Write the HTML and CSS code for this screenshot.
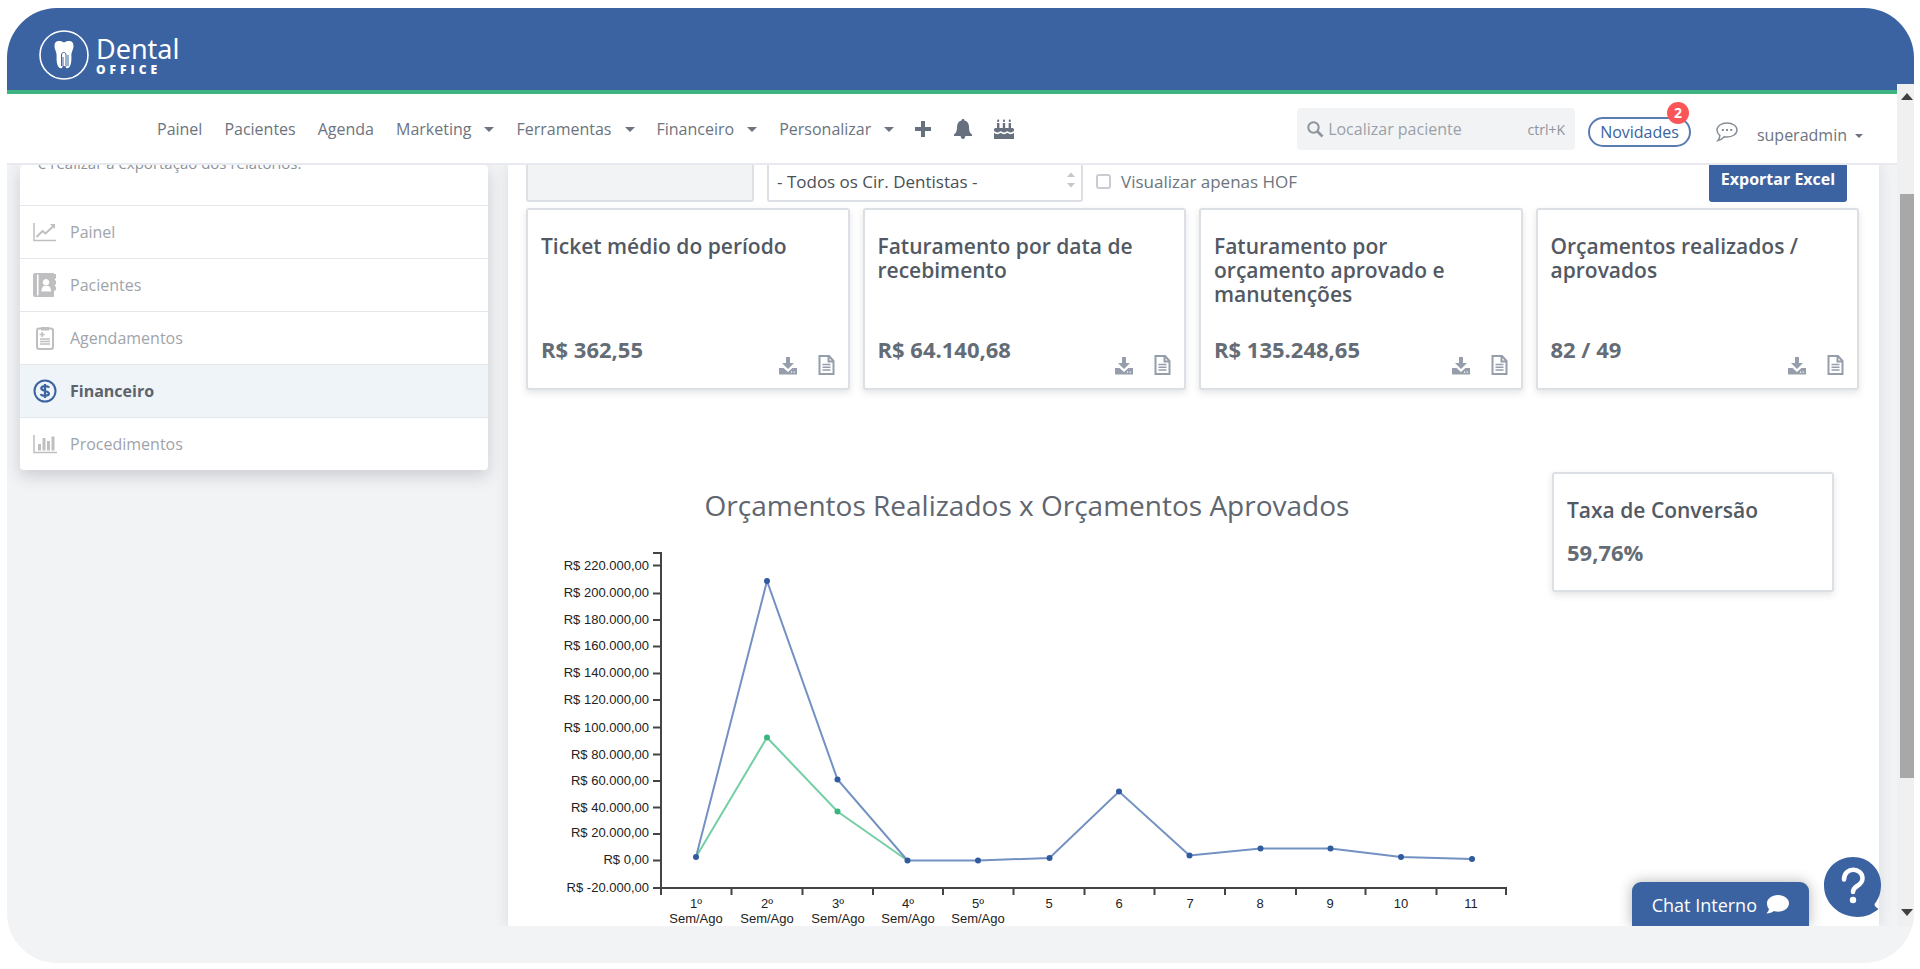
FILE: index.html
```html
<!DOCTYPE html>
<html lang="pt-BR">
<head>
<meta charset="utf-8">
<title>Dental Office</title>
<link rel="stylesheet" href="styles.css">
</head>
<body>
<svg class="sprite" aria-hidden="true">
  <symbol id="i-download" viewBox="0 0 18 18"><path fill="currentColor" d="M7 0h4v6h4L9 12 3 6h4zM0 11h4.600L9 15l4.400-4H18v6.500H0z"/><path fill="#fff" d="M12 14.500h1.200v1.200H12zM14.600 14.500h1.200v1.200h-1.200z"/></symbol>
  <symbol id="i-file" viewBox="0 0 17 20"><path fill="none" stroke="currentColor" stroke-width="2" d="M1.500 1h9.500l4.500 5v13h-14zM10.500 1v5.500h5"/><path fill="none" stroke="currentColor" stroke-width="1.500" d="M4.500 9.500h8M4.500 12.200h8M4.500 15h8"/></symbol>
</svg>
<div class="frame">
  <header class="topbar">
    <a class="brand" href="#" aria-label="Dental Office">
      <svg class="brand-mark" viewBox="0 0 50 50">
        <circle cx="25" cy="25" r="24" fill="none" stroke="#fff" stroke-width="1.600"/>
        <path fill="#fff" d="M25 12.500c-3-2.200-9.500-3-9.500 3.300 0 4 2.300 6 2.100 10.200-.2 5 .2 12 4.600 12.300 1.600.1 1-2.300 2.800-2.300s1.200 2.400 2.800 2.300c4.400-.3 4.800-7.300 4.600-12.300-.2-4.200 2.100-6.200 2.100-10.200 0-6.300-6.500-5.500-9.500-3.300z"/>
        <path fill="none" stroke="#3b63a1" stroke-width="1" d="M22.500 36V25c0-3.500 4.500-3.500 4.500 0v10c0 4-3 4.500-3 1V27M29 25v11"/>
      </svg>
      <span class="brand-text"><span class="brand-name">Dental</span><span class="brand-sub">OFFICE</span></span>
    </a>
  </header>

  <nav class="nav">
    <div class="nav-links">
      <a href="#">Painel</a>
      <a href="#">Pacientes</a>
      <a href="#">Agenda</a>
      <a href="#" class="drop">Marketing</a>
      <a href="#" class="drop">Ferramentas</a>
      <a href="#" class="drop">Financeiro</a>
      <a href="#" class="drop">Personalizar</a>
    </div>
    <div class="nav-icons">
      <button type="button" aria-label="Adicionar"><svg width="18" height="18" viewBox="0 0 18 18"><path fill="currentColor" d="M7 1h4v6h6v4h-6v6H7v-6H1V7h6z"/></svg></button>
      <button type="button" aria-label="Notificações"><svg width="18" height="20" viewBox="0 0 18 20"><path fill="currentColor" d="M9 0c1 0 1.500.7 1.500 1.600C13.500 2.300 15 4.800 15 8c0 5 1.500 6.500 3 7.500v1.500H11.300c0 1.800-1 3-2.300 3s-2.300-1.200-2.300-3H0v-1.500c1.500-1 3-2.500 3-7.500 0-3.200 1.500-5.700 4.500-6.400C7.500.7 8 0 9 0z"/></svg></button>
      <button type="button" aria-label="Aniversariantes"><svg width="20" height="20" viewBox="0 0 20 20"><path fill="currentColor" d="M3 4h2.400v6H3zM8.800 4h2.400v6H8.800zM14.600 4H17v6h-2.400zM4.200 0c1.600 1.600 1.400 3-.1 3S2.800 1.600 4.200 0zM10 0c1.600 1.600 1.400 3-.1 3S8.600 1.600 10 0zM15.800 0c1.600 1.600 1.400 3-.1 3S14.400 1.600 15.800 0zM1.500 9h17c1 0 1.500.8 1.500 2v1.200c-1.700 0-1.900 1.300-3.400 1.300-1.700 0-1.700-1.300-3.300-1.300s-1.700 1.300-3.300 1.300-1.700-1.300-3.300-1.300-1.600 1.300-3.300 1.300C2 13.500 1.700 12.200 0 12.200V11c0-1.200.5-2 1.500-2zM0 14c1.400 0 1.600 1.300 3.400 1.300 1.600 0 1.700-1.300 3.300-1.300s1.700 1.300 3.300 1.300 1.700-1.300 3.300-1.300 1.600 1.300 3.300 1.300c1.800 0 2-1.300 3.400-1.300v6H0z"/></svg></button>
    </div>
    <div class="nav-tools">
      <label class="search">
        <svg width="17" height="17" viewBox="0 0 17 17"><circle cx="6.500" cy="6.500" r="5.200" fill="none" stroke="currentColor" stroke-width="2"/><path d="M10.500 10.500l5 5" stroke="currentColor" stroke-width="2.600"/></svg>
        <input type="text" placeholder="Localizar paciente" aria-label="Localizar paciente">
        <span class="hint">ctrl+K</span>
      </label>
      <button type="button" class="news">Novidades<span class="badge">2</span></button>
      <button type="button" class="talk" aria-label="Mensagens"><svg width="22" height="20" viewBox="0 0 22 20"><path fill="none" stroke="currentColor" stroke-width="1.500" d="M11 1c5.600 0 10 3 10 7s-4.400 7-10 7c-1 0-2-.1-2.800-.3C6.500 16.600 4.500 18 2 18.600c1.200-1.400 1.800-3 1.800-5.200C2 12 1 10.200 1 8c0-4 4.400-7 10-7z"/><path fill="currentColor" d="M5.800 7h2v2h-2zM10 7h2v2h-2zM14.200 7h2v2h-2z"/></svg></button>
      <a href="#" class="user">superadmin</a>
    </div>
  </nav>

  <div class="viewport">
    <aside class="side">
      <p class="side-note">e realizar a exportação dos relatórios.</p>
      <a href="#" class="side-item"><svg class="side-icon" viewBox="0 0 24 24"><path fill="none" stroke="currentColor" stroke-width="1.500" d="M1 3v17.500h22"/><path fill="none" stroke="currentColor" stroke-width="2" d="M3.500 17l6-6 3 2.500L20 6.500"/><path fill="currentColor" d="M17 4h5v5z"/></svg>Painel</a>
      <a href="#" class="side-item"><svg class="side-icon" viewBox="0 0 24 24"><path fill="currentColor" fill-rule="evenodd" d="M2 0h18a1 1 0 0 1 1 1h2v4l-1.500 1.500L23 8v3l-1.500 1.500L23 14v3l-2 1v5a1 1 0 0 1-1 1H2a2 2 0 0 1-2-2V2a2 2 0 0 1 2-2zM4 1.500v21h1.500v-21zM13 6a3.300 3.300 0 1 0 .01 0zM8.500 18.500h9.500c0-4-1.500-5.500-3-5.500h-3.500c-1.500 0-3 1.500-3 5.500z"/></svg>Pacientes</a>
      <a href="#" class="side-item"><svg class="side-icon" viewBox="0 0 24 24"><rect x="4" y="2.500" width="16" height="20.500" rx="2" fill="none" stroke="currentColor" stroke-width="2"/><path fill="currentColor" d="M8 1h8v3.500H8zM8.400 6h1.500v1.800h1.800v1.500H9.900v1.800H8.400V9.300H6.600V7.800h1.800z"/><path stroke="currentColor" stroke-width="1.400" d="M7 13h10M7 15.500h10M7 18h10"/></svg>Agendamentos</a>
      <a href="#" class="side-item active"><svg class="side-icon" viewBox="0 0 24 24"><circle cx="12" cy="12" r="10.500" fill="none" stroke="currentColor" stroke-width="2"/><path fill="none" stroke="currentColor" stroke-width="2.200" d="M16 8.800C15.500 6.500 8.300 6.300 8.300 9.300c0 3.400 7.600 2 7.600 5.300 0 3-7.400 2.800-8 .3M12 5v14"/></svg>Financeiro</a>
      <a href="#" class="side-item"><svg class="side-icon" viewBox="0 0 24 24"><path fill="none" stroke="currentColor" stroke-width="1.500" d="M1 3v17.500h23"/><path fill="currentColor" d="M5 12h3v6.500H5zM9.500 6h3v12.500h-3zM14 9h3v9.500h-3zM18.500 4.500h3v14h-3z"/></svg>Procedimentos</a>
    </aside>

    <main class="panel">
      <form class="filters">
        <input class="field" type="text" disabled aria-label="Período">
        <span class="picker">
          <select aria-label="Cirurgião dentista"><option>- Todos os Cir. Dentistas -</option></select>
          <svg class="picker-arrows" width="8" height="16" viewBox="0 0 8 16"><path fill="#c3c7cc" d="M0 5l4-4.500L8 5zM0 11h8l-4 4.500z"/></svg>
        </span>
        <label class="check"><input type="checkbox">Visualizar apenas HOF</label>
        <button type="button" class="export">Exportar Excel</button>
      </form>

      <section class="cards">
        <article class="card">
          <h2>Ticket médio do período</h2>
          <div class="card-foot"><strong>R$ 362,55</strong><button type="button" aria-label="Baixar"><svg width="18" height="18"><use href="#i-download"/></svg></button><button type="button" aria-label="Relatório"><svg width="17" height="20"><use href="#i-file"/></svg></button></div>
        </article>
        <article class="card">
          <h2>Faturamento por data de recebimento</h2>
          <div class="card-foot"><strong>R$ 64.140,68</strong><button type="button" aria-label="Baixar"><svg width="18" height="18"><use href="#i-download"/></svg></button><button type="button" aria-label="Relatório"><svg width="17" height="20"><use href="#i-file"/></svg></button></div>
        </article>
        <article class="card">
          <h2>Faturamento por orçamento aprovado e manutenções</h2>
          <div class="card-foot"><strong>R$ 135.248,65</strong><button type="button" aria-label="Baixar"><svg width="18" height="18"><use href="#i-download"/></svg></button><button type="button" aria-label="Relatório"><svg width="17" height="20"><use href="#i-file"/></svg></button></div>
        </article>
        <article class="card">
          <h2>Orçamentos realizados / aprovados</h2>
          <div class="card-foot"><strong>82 / 49</strong><button type="button" aria-label="Baixar"><svg width="18" height="18"><use href="#i-download"/></svg></button><button type="button" aria-label="Relatório"><svg width="17" height="20"><use href="#i-file"/></svg></button></div>
        </article>
      </section>

      <section class="report">
        <div class="chart">
          <h1>Orçamentos Realizados x Orçamentos Aprovados</h1>
          <svg class="plot" viewBox="0 0 960 386" role="img" aria-label="Orçamentos realizados e aprovados">
            <path class="axis" d="M106 10h8v335h-8M106 22.500h8M106 50.500h8M106 77h8M106 103.500h8M106 130.500h8M106 157h8M106 184.500h8M106 211.500h8M106 238h8M106 264.500h8M106 291h8M106 317.500h8"/>
            <path class="axis" d="M114 352v-7h845v7M184.500 345v7M255.500 345v7M326 345v7M396 345v7M466.500 345v7M537.500 345v7M607.500 345v7M678 345v7M749 345v7M818.500 345v7M889.500 345v7"/>
            <g class="y-labels">
              <text x="102" y="27">R$ 220.000,00</text><text x="102" y="54">R$ 200.000,00</text><text x="102" y="81">R$ 180.000,00</text><text x="102" y="107">R$ 160.000,00</text><text x="102" y="134">R$ 140.000,00</text><text x="102" y="161">R$ 120.000,00</text><text x="102" y="189">R$ 100.000,00</text><text x="102" y="216">R$ 80.000,00</text><text x="102" y="242">R$ 60.000,00</text><text x="102" y="269">R$ 40.000,00</text><text x="102" y="294">R$ 20.000,00</text><text x="102" y="321">R$ 0,00</text><text x="102" y="349">R$ -20.000,00</text>
            </g>
            <g class="x-labels">
              <text x="149" y="365">1º</text><text x="149" y="380">Sem/Ago</text>
              <text x="220" y="365">2º</text><text x="220" y="380">Sem/Ago</text>
              <text x="291" y="365">3º</text><text x="291" y="380">Sem/Ago</text>
              <text x="361" y="365">4º</text><text x="361" y="380">Sem/Ago</text>
              <text x="431" y="365">5º</text><text x="431" y="380">Sem/Ago</text>
              <text x="502" y="365">5</text><text x="572" y="365">6</text><text x="643" y="365">7</text><text x="713" y="365">8</text><text x="783" y="365">9</text><text x="854" y="365">10</text><text x="924" y="365">11</text>
            </g>
            <path class="line approved" d="M149 314L220 194.500L290.500 268.500L360.500 317.500"/>
            <path class="line done" d="M149 314L220 38L290.500 236.500L360.500 317.500L431 317.500L502.500 315L572 248.500L642.500 312.500L713.500 305.500L783.500 305.500L854 314L925 316"/>
            <g class="dots approved-dots"><circle cx="220" cy="194.500" r="3"/><circle cx="290.500" cy="268.500" r="3"/></g>
            <g class="dots"><circle cx="149" cy="314" r="3"/><circle cx="220" cy="38" r="3"/><circle cx="290.500" cy="236.500" r="3"/><circle cx="360.500" cy="317.500" r="3"/><circle cx="431" cy="317.500" r="3"/><circle cx="502.500" cy="315" r="3"/><circle cx="572" cy="248.500" r="3"/><circle cx="642.500" cy="312.500" r="3"/><circle cx="713.500" cy="305.500" r="3"/><circle cx="783.500" cy="305.500" r="3"/><circle cx="854" cy="314" r="3"/><circle cx="925" cy="316" r="3"/></g>
          </svg>
        </div>
        <article class="card rate">
          <h2>Taxa de Conversão</h2>
          <strong>59,76%</strong>
        </article>
      </section>
    </main>

    <button type="button" class="chat">Chat Interno<svg width="23" height="19" viewBox="0 0 23 19"><path fill="#fff" d="M12 0c6.200 0 11 3.700 11 8.300s-4.800 8.400-11 8.400c-1.400 0-2.800-.2-4-.6C6.200 17.600 3.500 18.600.3 18.600c1.300-1.300 2.400-2.800 2.700-4.600C1.500 12.400 1 10.500 1 8.300 1 3.700 5.800 0 12 0z"/></svg></button>
    <button type="button" class="help" aria-label="Ajuda"><svg width="58" height="60" viewBox="0 0 58 60"><path fill="#3b63a1" d="M29 0c15.500 0 28 12 28 27.500 0 8-2 14-6.500 19.500 0 2 1.500 3.500 4 5-6 5-13 8-20.500 8C15 60 0 46 0 28.500 0 12 13 0 29 0z"/><path fill="none" stroke="#fff" stroke-width="4.500" stroke-linecap="round" d="M20 22.500c0-13 18.500-12.500 18.500-1 0 8-9.500 6.500-9.500 13.500"/><circle cx="29" cy="43" r="3.200" fill="#fff"/></svg></button>
  </div>

  <div class="scroll" aria-hidden="true">
    <svg width="12" height="7" viewBox="0 0 12 7"><path fill="#404040" d="M0 7l6-7 6 7z"/></svg>
    <span class="thumb"></span>
    <svg width="12" height="7" viewBox="0 0 12 7"><path fill="#404040" d="M0 0h12L6 7z"/></svg>
  </div>
</div>
</body>
</html>
```

FILE: styles.css
```css
* { box-sizing: border-box; }
body {
  margin: 0;
  padding: 8px 6px 6px 7px;
  height: 100vh;
  background: #fff;
  color: #6c757d;
  font-family: "Open Sans", "Noto Sans", sans-serif;
  font-size: 16px;
}
a { color: inherit; text-decoration: none; }
button, input, select { font: inherit; color: inherit; }
button { margin: 0; padding: 0; border: 0; background: none; cursor: pointer; }
svg { display: block; flex: none; }
.sprite { position: absolute; width: 0; height: 0; }

.frame {
  position: relative;
  display: flex;
  flex-direction: column;
  height: 100%;
  padding-bottom: 37px;
  border-radius: 50px;
  overflow: hidden;
  background: #f2f3f5;
}

.topbar {
  flex: none;
  display: flex;
  padding: 22px 32px 10px;
  background: #3b63a1;
  border-bottom: 4px solid #3eb580;
}
.brand { display: flex; align-items: center; gap: 7px; color: #fff; }
.brand-mark { width: 50px; height: 50px; }
.brand-text { display: flex; flex-direction: column; }
.brand-name { font-family: "Noto Sans", sans-serif; font-size: 27px; line-height: 30px; }
.brand-sub { font-size: 12px; font-weight: 800; line-height: 12px; letter-spacing: 4px; }

.nav {
  flex: none;
  display: flex;
  align-items: center;
  height: 71px;
  padding: 1px 51px 0 150px;
  background: #fff;
  border-bottom: 2px solid #e9eaef;
  color: #6c7480;
}
.nav-links { display: flex; gap: 22px; }
.drop::after, .user::after {
  content: "";
  display: inline-block;
  margin-left: 13px;
  vertical-align: 3px;
  border: 5px solid transparent;
  border-top-color: currentColor;
  border-bottom: 0;
}
.user::after { margin-left: 8px; border-width: 4px 4px 0; }
.nav-icons { display: flex; align-items: center; gap: 22px; margin-left: 20px; color: #66707e; }
.nav-tools { display: flex; align-items: center; margin-left: auto; }
.search {
  display: flex;
  align-items: center;
  width: 278px;
  height: 42px;
  padding: 0 10px;
  border-radius: 4px;
  background: #f2f3f5;
  color: #8d949c;
}
.search input { flex: 1; min-width: 0; padding: 0 0 0 4px; border: 0; outline: 0; background: none; }
.search input::placeholder { color: #9aa1a9; opacity: 1; }
.hint { font-size: 14px; }
.news {
  position: relative;
  height: 30px;
  margin: 6px 25px 0 13px;
  padding: 0 10px;
  border: 2px solid #5b7cb2;
  border-radius: 15px;
  color: #3b63a1;
  font-weight: 500;
}
.badge {
  position: absolute;
  top: -17px;
  right: 0;
  width: 22px;
  height: 22px;
  border-radius: 50%;
  background: #fc5558;
  color: #fff;
  font-size: 14px;
  font-weight: 700;
  line-height: 22px;
}
.talk { margin: 6px 19px 0 0; color: #868e96; }
.user { margin-top: 12px; font-weight: 500; }

.viewport {
  position: relative;
  flex: 1;
  min-height: 0;
  display: grid;
  grid-template-columns: 468fr 1371fr;
  gap: 20px;
  align-items: start;
  margin-right: 17px;
  padding: 0 18px 0 13px;
  overflow: hidden;
}

.side { background: #fff; border-radius: 4px; box-shadow: 0 6px 16px rgba(50, 55, 70, .2); }
.side-note { margin: -13px 0 0; padding: 0 18px 31px; color: #8c939b; font-size: 15px; line-height: 22px; }
.side-item {
  display: flex;
  align-items: center;
  gap: 13px;
  height: 53px;
  padding: 0 13px;
  border-top: 1px solid #e4e6ea;
  color: #9fa4ab;
}
.side-icon { width: 24px; height: 24px; color: #bfbfc1; }
.side-item.active { background: #eff4f8; color: #5c636c; font-weight: 700; }
.side-item.active .side-icon { color: #3b63a1; }

.panel {
  height: 100%;
  padding: 0 20px 0 18px;
  background: #fff;
  box-shadow: 0 0 14px rgba(50, 55, 70, .12);
}
.filters { display: flex; margin: -11px 0 6px; height: 48px; }
.field { width: 228px; border: 2px solid #dcdfe4; border-radius: 3px; background: #f2f3f5; }
.picker { position: relative; width: 316px; margin-left: 13px; }
.picker select {
  appearance: none;
  width: 100%;
  height: 100%;
  padding: 6px 8px 0;
  border: 2px solid #dcdfe4;
  border-radius: 3px;
  background: #fff;
  color: #495057;
  font-size: 17px;
}
.picker-arrows { position: absolute; right: 8px; top: 18px; }
.check { display: flex; align-items: center; gap: 10px; margin-left: 13px; padding-top: 6px; font-size: 17px; }
.check input {
  appearance: none;
  width: 15px;
  height: 15px;
  margin: 0;
  border: 2px solid #c9cdd3;
  border-radius: 3px;
}
.export {
  width: 138px;
  margin: 0 12px 0 auto;
  padding-top: 2px;
  border-radius: 3px;
  background: #3b63a1;
  color: #fff;
  font-weight: 700;
}

.cards { display: grid; grid-template-columns: repeat(4, 1fr); gap: 13px; }
.card {
  display: flex;
  flex-direction: column;
  min-height: 182px;
  padding: 24px 13px 13px;
  border: 2px solid #dcdfe4;
  border-radius: 3px;
  background: #fff;
  box-shadow: 0 3px 7px rgba(50, 55, 70, .13);
}
.card h2 { margin: 0; padding-right: 13px; color: #525963; font-size: 21px; font-weight: 600; line-height: 24px; }
.card strong { color: #646c76; font-size: 22px; font-weight: 700; line-height: 28px; }
.card-foot { display: flex; align-items: flex-end; gap: 21px; margin-top: auto; color: #969eac; }
.card-foot strong { margin: 0 auto 12px 0; }

.report {
  display: grid;
  grid-template-columns: 960fr 282px;
  gap: 45px;
  align-items: start;
  padding: 82px 25px 0 21px;
}
.chart h1 {
  margin: 13px 0 18px;
  color: #5f6670;
  font-size: 28px;
  font-weight: 400;
  line-height: 40px;
  text-align: center;
}
.plot { width: 100%; }
.axis { fill: none; stroke: #444; stroke-width: 2; }
.y-labels, .x-labels { fill: #222; font-family: "Liberation Sans", Arial, sans-serif; font-size: 13px; }
.y-labels { text-anchor: end; }
.x-labels { text-anchor: middle; }
.line { fill: none; stroke-width: 2; }
.line.done { stroke: #7391c2; }
.line.approved { stroke: #74cfa5; }
.dots { fill: #305b9f; }
.approved-dots { fill: #38b67e; }
.rate { min-height: 120px; }
.rate strong { margin-top: 16px; }

.chat {
  position: absolute;
  right: 88px;
  bottom: 0;
  display: flex;
  align-items: center;
  gap: 9px;
  height: 44px;
  padding: 1px 20px 0;
  border-radius: 9px 9px 0 0;
  background: #3b63a1;
  color: #fff;
  font-size: 18px;
  box-shadow: 0 0 14px rgba(0, 0, 0, .3);
}
.help { position: absolute; right: 15px; bottom: 9px; }

.scroll {
  position: absolute;
  top: 76px;
  right: 0;
  bottom: 37px;
  display: flex;
  flex-direction: column;
  align-items: center;
  width: 17px;
  padding: 9px 0 10px 3px;
  overflow: hidden;
  background: #f0f0f0;
}
.thumb { width: 100%; height: 71%; margin: 94px 0 auto; background: #a8a8a8; }
```
